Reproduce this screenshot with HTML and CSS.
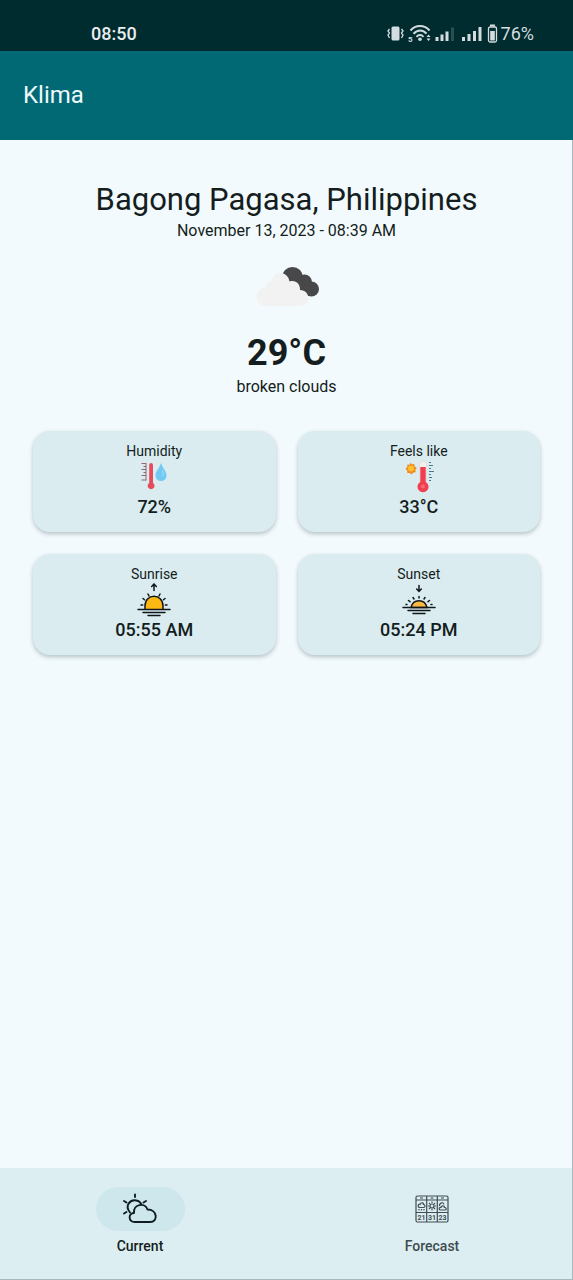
FILE: index.html
```html
<!DOCTYPE html>
<html lang="en">
<head>
<meta charset="utf-8">
<meta name="viewport" content="width=device-width, initial-scale=1">
<title>Klima</title>
<link rel="stylesheet" href="styles.css">
</head>
<body>
<div class="app">
  <div class="status">
    <span class="clock">08:50</span>
    <div class="indicators">
      <svg class="signals" width="112" height="20" viewBox="0 0 112 20" aria-hidden="true">
        <g fill="#d3dddf">
          <rect x="4.500" y="2.500" width="8" height="14" rx="1.500"/>
          <path d="M2.500 5 1 7l1.500 2L1 11l1.500 3M14.500 5l1.500 2-1.500 2 1.500 2-1.500 3" fill="none" stroke="#d3dddf" stroke-width="1.300"/>
          <g fill="none" stroke="#d3dddf" stroke-width="2">
            <path d="M23.500 6.500c5-6 14-6 19 0"/>
            <path d="M26.500 9.700c4-4.300 9.500-4.300 13 0"/>
            <path d="M29.500 12.800c2-2.300 5-2.300 7 0"/>
          </g>
          <circle cx="33" cy="15.200" r="1.800"/>
          <text x="21" y="17.500" class="band">5</text>
          <path d="m39.500 13 2-2.500 2 2.500zM39.500 14.500l2 2.500 2-2.500z"/>
          <rect x="48.500" y="13" width="3" height="4"/>
          <rect x="53.500" y="10.500" width="3" height="6.500"/>
          <rect x="58.500" y="7.500" width="3" height="9.500"/>
          <rect x="64" y="3.500" width="3" height="13.500" opacity=".2"/>
          <rect x="75" y="13" width="3" height="4"/>
          <rect x="80.500" y="10" width="3" height="7"/>
          <rect x="86" y="7" width="3" height="10"/>
          <rect x="91.500" y="3" width="3" height="14"/>
          <rect x="103" y="0.500" width="5" height="2"/>
          <rect x="101.500" y="3" width="8" height="15" rx="1.500" fill="none" stroke="#d3dddf" stroke-width="1.300"/>
          <rect x="103.200" y="7" width="4.600" height="9.500"/>
        </g>
      </svg>
      <span class="battery">76%</span>
    </div>
  </div>
  <header class="appbar"><h1 class="brand">Klima</h1></header>
  <main class="content">
    <section class="now">
      <h2 class="place">Bagong Pagasa, Philippines</h2>
      <p class="date">November 13, 2023 - 08:39 AM</p>
      <svg class="clouds" width="64" height="44" viewBox="0 0 64 44" aria-hidden="true">
        <g fill="#48484a">
          <circle cx="37.500" cy="12.500" r="10.500"/><circle cx="49.500" cy="17" r="7.500"/><circle cx="56.500" cy="24" r="7.500"/><path d="M37 14h12l7 11v6H44z"/>
        </g>
        <path d="M11 41a9.200 9.200 0 0 1-.5-18.400 6 6 0 0 1 6-6.600C19 4.500 33 6 34.500 16.500c6-2 11 2.500 10.500 8.500 11 0 11 16 1 16z" fill="#f2f2f2"/>
      </svg>
      <p class="temp">29°C</p>
      <p class="sky">broken clouds</p>
    </section>
    <section class="cards">
      <article class="card">
        <h3 class="label">Humidity</h3>
        <svg class="icon" width="34" height="34" viewBox="0 0 34 34" aria-hidden="true">
          <path d="M9 3v17.500M4.500 3.500H9M6.500 6.500H9M4.500 9.500H9M6.500 12.500H9M4.500 15.500H9M4.500 20H9" fill="none" stroke="#94656d"/>
          <path d="M12.200 5a1.900 1.900 0 0 1 3.800 0v18a3.400 3.400 0 1 1-3.800 0z" fill="#e64b5b"/>
          <path d="M24 3c2 6 5.500 8 5.500 12.500a5.500 5.500 0 0 1-11 0C18.500 11 22 9 24 3z" fill="#72caf4"/>
          <path d="M25 10c1 2 2 4 .5 6" stroke="#a5dff7" fill="none"/>
        </svg>
        <p class="value">72%</p>
      </article>
      <article class="card">
        <h3 class="label">Feels like</h3>
        <svg class="icon" width="34" height="34" viewBox="0 0 34 34" aria-hidden="true">
          <path d="m8.500 2.500 1.500 2 2.400-.5.200 2.400L14.800 8l-1.500 1.800.4 2.500-2.400.2-1.600 2-1.900-1.500-2.500.1-.1-2.500-1.700-1.900 1.800-1.700.1-2.400 2.500.1z" fill="#f28a1c"/>
          <circle cx="9" cy="8.500" r="3" fill="#ffbf2f"/>
          <path d="M17.500 4.500a3.500 3.500 0 0 1 7 0V22h-7z" fill="#f4efed" stroke="#dcd2d2" stroke-width=".6"/>
          <path d="M18.300 7h5.400v15a5.500 5.500 0 1 1-5.400 0z" fill="#f03f4f"/>
          <circle cx="21" cy="26.500" r="2" fill="#f76975"/>
          <path d="M27 2.500h2M27 5.500h4M27 8.500h2M27 11.500h5M27 14.500h2M27 17.500h3M27 20.500h2" stroke="#457b8a" stroke-width="1.200"/>
        </svg>
        <p class="value">33°C</p>
      </article>
      <article class="card">
        <h3 class="label">Sunrise</h3>
        <svg class="icon" width="34" height="34" viewBox="0 0 34 34" aria-hidden="true">
          <g fill="none" stroke="#101719" stroke-width="1.500" stroke-linecap="round">
            <path d="M17 7.500V1.500M14.700 3.500 17 1l2.300 2.500"/>
            <path d="M8 26v-3c0-13 18-13 18 0v3" fill="#fdb913"/>
            <path d="M1 26.500h32M6 29.500h22M11 32.500h12"/>
            <path d="m11 11 1 2M23 11l-1 2M6 15.500l1.500 1.300M28 15.500l-1.500 1.300M4 22h1.700M28.300 22H30"/>
          </g>
        </svg>
        <p class="value">05:55 AM</p>
      </article>
      <article class="card">
        <h3 class="label">Sunset</h3>
        <svg class="icon" width="34" height="34" viewBox="0 0 34 34" aria-hidden="true">
          <g fill="none" stroke="#101719" stroke-width="1.500" stroke-linecap="round">
            <path d="M17 2.500v6M14.700 6 17 8.500 19.300 6"/>
            <path d="M9 24.500c2-9 14-9 16 0z" fill="#fdb944"/>
            <path d="M1 24.500h32M6 27.500h22M11 30.500h12"/>
            <path d="M17 13.500V15M11 14.500l1 1.500M23 14.500 22 16M6.500 17.500 8 18.700M27.500 17.500 26 18.700M4 21.500h1M29 21.500h1"/>
          </g>
        </svg>
        <p class="value">05:24 PM</p>
      </article>
    </section>
  </main>
  <nav class="tabs">
    <button class="tab active" type="button" aria-current="page">
      <span class="pill">
        <svg width="36" height="32" viewBox="0 0 36 32" aria-hidden="true">
          <g fill="none" stroke="#0e1c20" stroke-width="1.900" stroke-linecap="round" stroke-linejoin="round">
            <path d="M13 29c-7 0-7-9-1-9-1-9 11-11 13.500-3.500 10 0 11 12.500 2.500 12.500z"/>
            <path d="M8 19.500C2 12 9 6 14.500 7.500c2.500.5 4 2 4.800 3.700"/>
            <path d="M13 1.500V4M2 8l2.500 1.500M24 8l-2.500 1.500M2 20.500 4.500 19"/>
          </g>
        </svg>
      </span>
      <span class="tab-label">Current</span>
    </button>
    <button class="tab" type="button">
      <span class="pill">
        <svg width="34" height="28" viewBox="0 0 34 28" aria-hidden="true">
          <g fill="none" stroke="#3f4d52" stroke-width="1.200">
            <rect x="1" y="1" width="32" height="26" rx="1.500"/>
            <path d="M1 5h32M1 17.500h32M11.700 1v26M22.300 1v26"/>
            <path d="M5 3h3M15.500 3h3M26 3h3"/>
            <path d="M4 12.500c-2-2 0-4 1-3 1-3 4-1.500 3.500 0 2 0 2 3 0 3zM4 14v1.500M6.500 14v1.500M9 14v1.500"/>
            <circle cx="17" cy="11" r="2"/>
            <path d="M17 6.500V8M17 14v1.500M12.800 11h1.500M19.700 11h1.500M14 8l1 1M20 8l-1 1M14 14l1-1M20 14l-1-1"/>
            <path d="M25 15c-2-2 0-3 1-2.500 1-3 4-1 3.500 0 2.500 0 2 2.500.5 2.500zM24.500 11c0-4 4-4 4.500-1.500"/>
          </g>
          <g class="days" fill="#3f4d52"><text x="6.500" y="25">21</text><text x="17" y="25">31</text><text x="27.500" y="25">23</text></g>
        </svg>
      </span>
      <span class="tab-label">Forecast</span>
    </button>
  </nav>
</div>
</body>
</html>
```
FILE: styles.css
```css
* { box-sizing: border-box; }
body { margin: 0; font-family: Roboto, "Liberation Sans", sans-serif; color: #141d20; background: #f2fafd; }
h1, h2, h3, p { margin: 0; font-weight: 400; }
svg { display: block; }
.app { min-height: 100vh; display: flex; flex-direction: column; }
.status { height: 51px; padding: 16px 39px 0 91px; display: flex; justify-content: space-between; align-items: center; background: #002b2f; color: #e9eff0; font-size: 18px; line-height: 20px; }
.clock { font-weight: 500; }
.indicators { display: flex; align-items: center; gap: 2px; color: #d3dddf; }
.band { font-size: 8px; font-weight: 700; }
.appbar { padding: 28px 23px; background: #006974; color: #eefafa; }
.brand { font-size: 24px; line-height: 33px; }
.content { flex: 1; padding: 40px 32px 24px 33px; border-right: 1px solid #a9b8bd; }
.now { display: flex; flex-direction: column; align-items: center; text-align: center; }
.place { font-size: 31px; line-height: 40px; }
.date { font-size: 16px; line-height: 22px; }
.clouds { margin: 23px 0 20px; }
.temp { font-size: 36px; line-height: 48px; font-weight: 700; }
.sky { font-size: 16px; line-height: 20px; }
.cards { margin-top: 34px; display: grid; grid-template-columns: 1fr 1fr; gap: 22px; }
.card { padding: 11px 16px 14px; display: flex; flex-direction: column; align-items: center; background: #daecf0; border-radius: 17px; box-shadow: 0 2px 4px rgba(0, 30, 40, .25); }
.label { font-size: 14px; line-height: 18px; }
.icon { margin-bottom: 2px; }
.value { font-size: 18px; line-height: 22px; font-weight: 500; }
.tabs { display: flex; background: #dceef2; border-right: 1px solid #a9b8bd; border-bottom: 1px solid #a9b8bd; padding: 19px 0 24px; }
.tab { flex: 1; padding: 0 6px 0 0; border: 0; background: none; font: inherit; color: #3f4b4f; display: flex; flex-direction: column; align-items: center; gap: 6px; }
.tab:last-child { padding: 0 0 0 6px; }
.pill { width: 89px; height: 44px; border-radius: 22px; display: grid; place-items: center; }
.active { color: #141d20; }
.active .pill { background: #cde7ed; }
.tab-label { font-size: 14px; line-height: 18px; font-weight: 500; }
.days { font-size: 7px; font-weight: 700; text-anchor: middle; }
```
